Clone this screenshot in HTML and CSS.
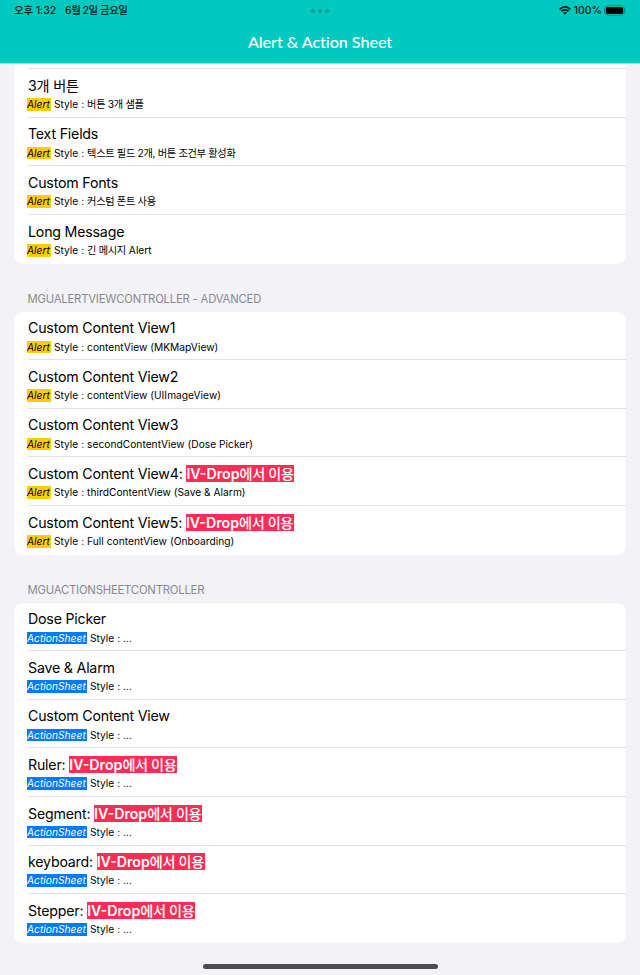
FILE: index.html
```html
<!DOCTYPE html>
<html lang="ko">
<head>
<meta charset="utf-8">
<title>Alert &amp; Action Sheet</title>
<link rel="stylesheet" href="styles.css">
</head>
<body>
<header class="top">
  <div class="status">
    <div class="clock"><span class="time">오후 1:32</span><span class="date">6월 2일 금요일</span></div>
    <div class="dots"><i></i><i></i><i></i></div>
    <div class="power">
      <svg class="wifi" viewBox="0 0 12 9" width="12" height="9"><g fill="none" stroke="#021a18" stroke-width="1.7"><path d="M.6 3.3Q6-1.6 11.4 3.3"/><path d="M2.5 5.3Q6 2.2 9.5 5.3"/></g><path fill="#021a18" d="M4.1 6.7Q6 5.2 7.9 6.7L6 8.7Z"/></svg>
      <span class="percent">100%</span>
      <svg class="battery" viewBox="0 0 23 11" width="23" height="11"><rect x=".5" y=".6" width="20" height="9.6" rx="3" fill="none" stroke="#078c83" stroke-width="1"/><rect x="1.8" y="1.9" width="17.4" height="7" rx="1.7" fill="#000"/><path d="M21.6 3.8Q22.9 5.4 21.6 7Z" fill="#078c83"/></svg>
    </div>
  </div>
  <h1>Alert &amp; Action Sheet</h1>
</header>
<main>
  <section class="card cut">
    <div class="row"><div class="title">3개 버튼</div><div class="sub"><em class="alert">Alert</em> Style : <span class="ko">버튼 3개 샘플</span></div></div>
    <div class="row"><div class="title">Text Fields</div><div class="sub"><em class="alert">Alert</em> Style : <span class="ko">텍스트 필드 2개, 버튼 조건부 활성화</span></div></div>
    <div class="row"><div class="title">Custom Fonts</div><div class="sub"><em class="alert">Alert</em> Style : <span class="ko">커스텀 폰트 사용</span></div></div>
    <div class="row"><div class="title">Long Message</div><div class="sub"><em class="alert">Alert</em> Style : <span class="ko">긴 메시지</span> Alert</div></div>
  </section>
  <h2>MGUALERTVIEWCONTROLLER - ADVANCED</h2>
  <section class="card">
    <div class="row"><div class="title">Custom Content View1</div><div class="sub"><em class="alert">Alert</em> Style : contentView (MKMapView)</div></div>
    <div class="row"><div class="title">Custom Content View2</div><div class="sub"><em class="alert">Alert</em> Style : contentView (UIImageView)</div></div>
    <div class="row"><div class="title">Custom Content View3</div><div class="sub"><em class="alert">Alert</em> Style : secondContentView (Dose Picker)</div></div>
    <div class="row"><div class="title">Custom Content View4: <b class="drop">IV-Drop<span>에서 이용</span></b></div><div class="sub"><em class="alert">Alert</em> Style : thirdContentView (Save &amp; Alarm)</div></div>
    <div class="row"><div class="title">Custom Content View5: <b class="drop">IV-Drop<span>에서 이용</span></b></div><div class="sub"><em class="alert">Alert</em> Style : Full contentView (Onboarding)</div></div>
  </section>
  <h2>MGUACTIONSHEETCONTROLLER</h2>
  <section class="card">
    <div class="row"><div class="title">Dose Picker</div><div class="sub"><em class="sheet">ActionSheet</em> Style : ...</div></div>
    <div class="row"><div class="title">Save &amp; Alarm</div><div class="sub"><em class="sheet">ActionSheet</em> Style : ...</div></div>
    <div class="row"><div class="title">Custom Content View</div><div class="sub"><em class="sheet">ActionSheet</em> Style : ...</div></div>
    <div class="row"><div class="title">Ruler: <b class="drop">IV-Drop<span>에서 이용</span></b></div><div class="sub"><em class="sheet">ActionSheet</em> Style : ...</div></div>
    <div class="row"><div class="title">Segment: <b class="drop">IV-Drop<span>에서 이용</span></b></div><div class="sub"><em class="sheet">ActionSheet</em> Style : ...</div></div>
    <div class="row"><div class="title">keyboard: <b class="drop">IV-Drop<span>에서 이용</span></b></div><div class="sub"><em class="sheet">ActionSheet</em> Style : ...</div></div>
    <div class="row"><div class="title">Stepper: <b class="drop">IV-Drop<span>에서 이용</span></b></div><div class="sub"><em class="sheet">ActionSheet</em> Style : ...</div></div>
  </section>
</main>
<div class="home"></div>
</body>
</html>
```
FILE: styles.css
```css
* { box-sizing: border-box; }
body {
  margin: 0;
  height: 975px;
  overflow: hidden;
  background: #f2f2f7;
  color: #000;
  font-family: Inter, "Noto Sans CJK KR", sans-serif;
}
.top {
  height: 64px;
  background: #00c9bf;
  border-bottom: 1px solid #8be6e1;
}
.status {
  height: 21px;
  padding: 0 14px;
  display: grid;
  grid-template-columns: 1fr auto 1fr;
  align-items: center;
  font-size: 10.5px;
  line-height: 21px;
  font-weight: 500;
  color: #021a18;
}
.clock { display: flex; gap: 9px; white-space: nowrap; }
.time { letter-spacing: -0.1px; }
.date { letter-spacing: -0.5px; }
.dots { display: flex; gap: 3px; }
.dots i { width: 4px; height: 4px; border-radius: 50%; background: #079b92; }
.power { display: flex; justify-content: flex-end; align-items: center; margin-right: -1px; }
.percent { margin: 0 2px 0 3px; }
h1 {
  margin: 0;
  height: 41px;
  line-height: 41px;
  text-align: center;
  font-family: Lato, sans-serif;
  font-weight: 500;
  font-size: 16.2px;
  letter-spacing: -0.08px;
  font-variant-ligatures: none;
  color: #fff;
}
.card {
  margin: 0 14px;
  background: #fff;
  border-radius: 9px;
  overflow: hidden;
}
.cut { border-radius: 0 0 9px 9px; padding-top: 5.2px; }
.row {
  height: 48.6px;
  padding: 7.6px 0 0 14px;
  background: linear-gradient(#e3e3e5, #e3e3e5) 14px 100% / 100% 1px no-repeat;
  white-space: nowrap;
}
.row:last-child { background: none; }
.cut::before {
  content: "";
  display: block;
  height: 1px;
  margin: -1px 0 0 14px;
  background: #e3e3e5;
}
.title {
  height: 17.4px;
  line-height: 17.8px;
  font-size: 14.2px;
  letter-spacing: -0.2px;
}
.drop {
  display: inline-block;
  width: 108px;
  height: 17.4px;
  vertical-align: top;
  background: #ff2d55;
  color: #fff;
  font-weight: 600;
  letter-spacing: 0;
}
.drop span { font-weight: 500; letter-spacing: -0.4px; }
.sub {
  margin-top: 4px;
  height: 12.6px;
  line-height: 13.6px;
  font-size: 10.2px;
  letter-spacing: 0.03px;
}
.sub em {
  display: inline-block;
  height: 12.6px;
  vertical-align: top;
  margin-left: -1px;
}
.alert { width: 24px; background: #ffcc00; }
.sheet { width: 60px; background: #007aff; color: #fff; }
.ko { letter-spacing: -0.3px; }
h2 {
  margin: 0;
  height: 48px;
  padding: 27px 0 0 27.5px;
  font-weight: 400;
  font-size: 11.3px;
  line-height: 17px;
  letter-spacing: -0.2px;
  color: #8a8a8e;
}
.home {
  width: 235px;
  height: 5px;
  margin: 21px auto 0;
  border-radius: 3px;
  background: #4d4d4f;
}
```
